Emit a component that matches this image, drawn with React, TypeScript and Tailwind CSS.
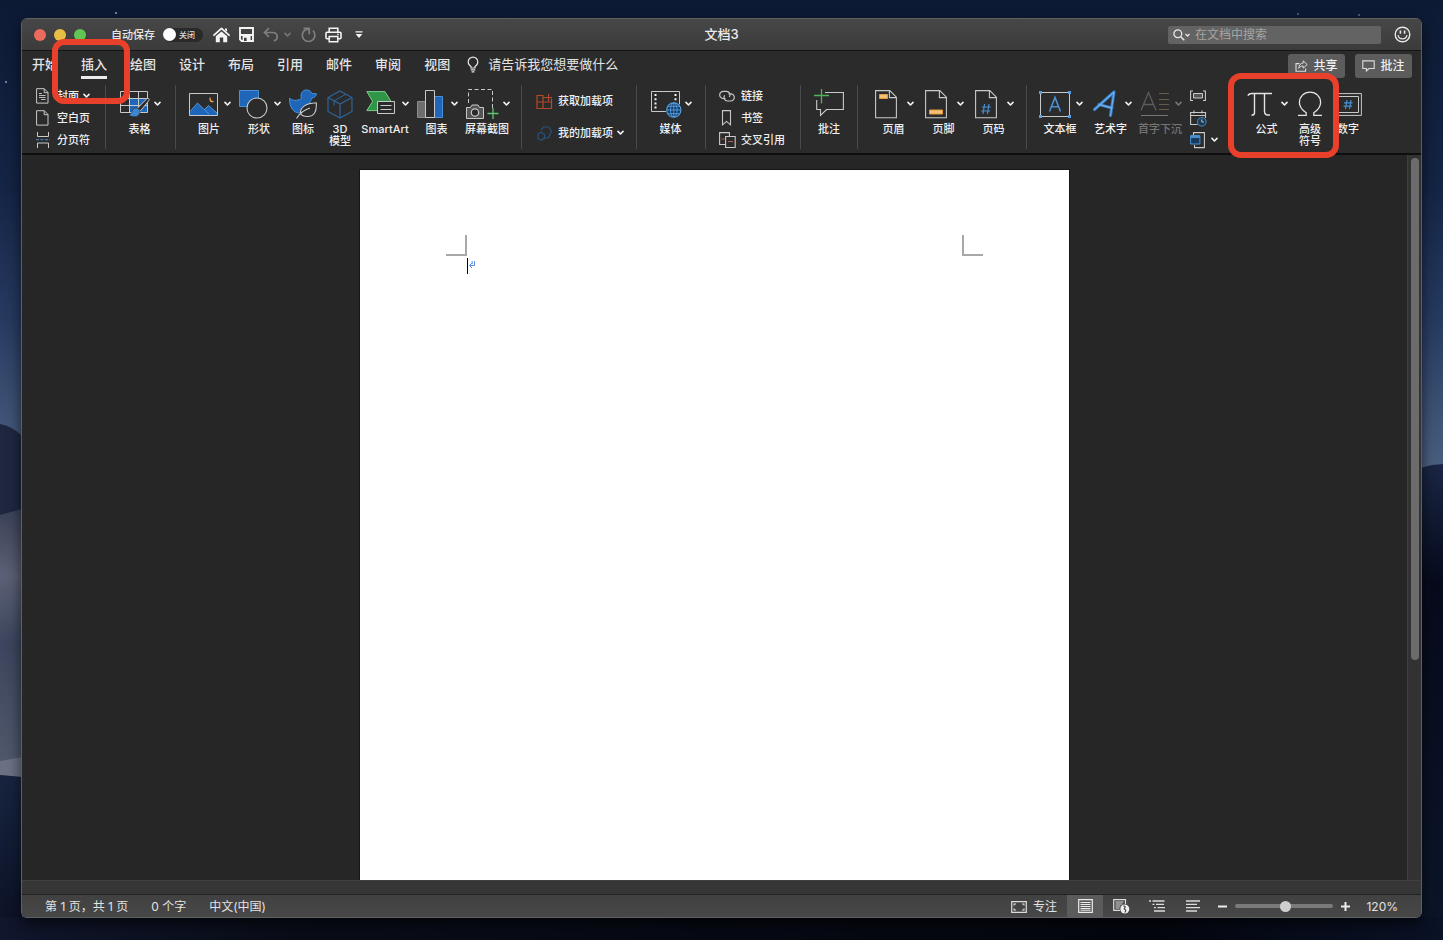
import React, { useState } from "react";

type IconProps = { w: number; h: number; children: React.ReactNode };

function Icon({ w, h, children }: IconProps) {
  return (
    <svg width={w} height={h} viewBox={`0 0 ${w} ${h}`} fill="none" className="block shrink-0" aria-hidden="true">
      {children}
    </svg>
  );
}

const LINE = "#c9c9c9";
const BLUE = "#1f66b8";
const SKY = "#4a90d0";

function Chevron({ dim = false }: { dim?: boolean }) {
  return (
    <Icon w={7} h={6}>
      <path d="M1 1.4 3.5 4 6 1.4" stroke={dim ? "#777" : "#f2f2f2"} strokeWidth="1.6" strokeLinecap="round" strokeLinejoin="round" />
    </Icon>
  );
}

/* ---------- title bar icons ---------- */

const HomeIcon = () => (
  <Icon w={17} h={16}>
    <path d="M1 8.2 8.5 1.4 16 8.2" stroke="#f4f4f4" strokeWidth="1.8" strokeLinecap="round" strokeLinejoin="round" />
    <path d="M2.8 9.2 8.5 4.4l5.7 4.800v6h-4V10.500H6.800v4.700h-4z" fill="#f4f4f4" />
    <path d="M12 1.4h2v3.4l-2-1.8z" fill="#f4f4f4" />
  </Icon>
);

const SaveIcon = () => (
  <Icon w={15} h={15}>
    <path d="M1 1h13v13H2.600L1 12.400z" stroke="#f4f4f4" strokeWidth="1.900" />
    <path d="M1 7h13v2H1z" fill="#f4f4f4" />
    <path d="M3.600 8.500h8V14h-8z" fill="#f4f4f4" />
    <path d="M5 10.800h2.600V14H5z" fill="#3f3f3f" />
  </Icon>
);

const UndoIcon = () => (
  <Icon w={16} h={15}>
    <path d="M6 1.2 1.5 5.5 6 9.8M1.8 5.5h7.4c3 0 5 1.8 5 4.3 0 2.2-1.4 3.7-3.4 4" stroke="#7e7e7e" strokeWidth="1.7" />
  </Icon>
);

const RedoIcon = () => (
  <Icon w={16} h={16}>
    <path d="M13 3.700a6.300 6.300 0 1 1-8.600-.2L9 1.800" stroke="#7e7e7e" strokeWidth="1.700" />
    <path d="M3.500 1.400H9.200V7.200" stroke="#7e7e7e" strokeWidth="1.700" />
  </Icon>
);

const PrintIcon = () => (
  <Icon w={17} h={16}>
    <path d="M4.2 5V1.2h8.6V5" stroke="#f4f4f4" strokeWidth="1.6" />
    <rect x="1" y="5.2" width="15" height="6.6" rx="1" stroke="#f4f4f4" strokeWidth="1.6" />
    <path d="M4.2 9.4h8.6v5.4H4.2z" fill="#3f3f3f" stroke="#f4f4f4" strokeWidth="1.5" />
    <circle cx="13" cy="7.4" r=".8" fill="#f4f4f4" />
  </Icon>
);

const CustomizeIcon = () => (
  <Icon w={8} h={8}>
    <path d="M.5.2h7v1.4h-7zM.6 3h6.8L4 7z" fill="#f4f4f4" />
  </Icon>
);

const SmileIcon = () => (
  <Icon w={17} h={17}>
    <circle cx="8.5" cy="8.5" r="7.300" stroke="#e8e8e8" strokeWidth="1.400" />
    <path d="M6.400 4.500v3.200M10.600 4.500v3.200" stroke="#e8e8e8" strokeWidth="1.600" />
    <path d="M4 9.200c.5 2.300 2.300 3.700 4.500 3.700s4-1.400 4.500-3.700" stroke="#e8e8e8" strokeWidth="1.300" />
  </Icon>
);

const BulbIcon = () => (
  <Icon w={12} h={17}>
    <path d="M4 12V10.400C2.300 9.400 1.200 7.800 1.200 5.900a4.800 4.800 0 0 1 9.600 0c0 1.900-1.100 3.500-2.800 4.500V12z" stroke="#e6e6e6" strokeWidth="1.200" />
    <path d="M3.800 13.800h4.400M4.600 15.800h2.800" stroke="#e6e6e6" strokeWidth="1.200" />
  </Icon>
);

const ShareIcon = () => (
  <Icon w={13} h={12}>
    <path d="M4.500 3.600H1v7.600h9.600V8.400" stroke="#dcdcdc" strokeWidth="1.100" />
    <path d="M8.200.9v2.200C5.400 3.300 4 5.200 3.700 8.300c1.200-1.600 2.500-2.300 4.500-2.300v2.200l4-3.600z" stroke="#dcdcdc" strokeWidth="1" />
  </Icon>
);

const BubbleIcon = () => (
  <Icon w={13} h={12}>
    <path d="M.8.900h11.400v7.600H7L4.400 11V8.500H.8z" stroke="#dcdcdc" strokeWidth="1.100" />
  </Icon>
);

/* ---------- ribbon icons ---------- */

const CoverIcon = () => (
  <Icon w={13} h={16}>
    <path d="M.6.700h7.600L12 4.500v10.600H.6zM8.200.700v4H12" stroke={LINE} />
    <path d="M3 5.500h3M3 7.500h6.600M3 9.500h6.600M5 11.500h4.600" stroke={LINE} strokeWidth=".9" />
  </Icon>
);

const BlankIcon = () => (
  <Icon w={13} h={16}>
    <path d="M.6.700h7.600L12 4.500v10.600H.6zM8.200.700v4H12" stroke={LINE} />
  </Icon>
);

const BreakIcon = () => (
  <Icon w={14} h={16}>
    <path d="M1.500 0v4.500h11V0M1.500 16v-5h11v5" stroke={LINE} />
    <path d="M0 7.700h14" stroke={SKY} strokeDasharray="3 1.500" />
  </Icon>
);

const TableIcon = () => (
  <Icon w={30} h={28}>
    <path d="M9.500 8h18v15h-18z" fill={BLUE} />
    <path d="M.5 1.500h27v21H.5zM.5 8.500h27M.5 15.500h27M9.500 1.500v21M18.500 1.500v21" stroke={LINE} />
    <path d="M28.600 8.500c.9.500.6 1.600 0 2.400L20.400 21l-3.200-2.600 9.400-9.400c.7-.6 1.400-.9 2-.5z" fill="#2b2b2b" stroke={LINE} />
    <path d="M17.200 18.200c-3-.6-4.600.8-5.200 3-.5 2-1.600 3.200-3.600 3.600 3.200 2.800 9.400 2.600 11-.6.600-1.300.6-2.300.6-3.200z" fill="#3d86d2" stroke="#2b2b2b" strokeWidth=".6" />
  </Icon>
);

const PictureIcon = () => (
  <Icon w={29} h={23}>
    <path d="M1 18.500 8.500 10l6.700 6.500 4.300-4.300L28 20v2H1z" fill={BLUE} />
    <path d="M1 18.500 8.500 10 20 21M15.500 16.500l4-4L28 20" stroke="#5a9ade" strokeWidth=".9" />
    <path d="M.5.500h28v22H.5z" stroke={LINE} />
    <path d="M21.200 4.500c-.2 2.400 1 4 3.400 3.900-1.800 1.600-5 .2-3.400-3.900z" fill="#f0a54a" stroke="#f0a54a" strokeWidth=".6" />
  </Icon>
);

const ShapesIcon = () => (
  <Icon w={29} h={29}>
    <path d="M.5.500h19v16H.5z" fill={BLUE} stroke="#4b8fd6" />
    <circle cx="18" cy="18" r="10" fill="#2b2b2b" stroke={LINE} strokeWidth="1.100" />
  </Icon>
);

const DuckIcon = () => (
  <Icon w={28} h={30}>
    <path d="M12.500 9.500C11 5 13 1 17.500 1c3 0 4.800 1.600 5.600 3.600l4.400.2c-.4 2.600-2.200 4-4.600 4.200-.6 2-1.700 3-1.700 4.500l-5 5-5 5.500C5 24.500 0 18.500.6 9c2 2.800 7.400 3.300 11.900.5z" fill={BLUE} stroke="#4b8fd6" />
    <path d="M27.300 13.800c.5 8-1.600 13.700-9 13.700-3 0-5.700-1-6.800-3-.6-6.200 5-10 15.800-10.700z" fill="#2b2b2b" stroke={LINE} strokeWidth="1.100" />
    <path d="M7.500 29.500c3-5 7-8.500 13.500-10.500" stroke={LINE} strokeWidth="1.100" />
  </Icon>
);

const CubeIcon = () => (
  <Icon w={26} h={29}>
    <path d="M13 1 25 7.500v14L13 28 1 21.500v-14z" stroke="#2f6499" strokeWidth="1.200" />
    <path d="M1 7.500 13 14l12-6.500M13 14v14" stroke="#2f6499" strokeWidth="1.200" />
    <path d="m7 10.800 12-6.600M7 10.800v5" stroke="#2f6499" />
  </Icon>
);

const SmartArtIcon = () => (
  <Icon w={32} h={26}>
    <path d="M3.800.600H22l6 9.800-5.200 9.200H3.800L9.600 10.400z" fill="#2f9547" stroke="#7fca8d" />
    <path d="M14.500 10.500h17v12h-17z" fill="#2b2b2b" stroke={LINE} />
    <path d="M17.500 14.500h11M17.500 18.500h11" stroke={LINE} />
  </Icon>
);

const ChartIcon = () => (
  <Icon w={27} h={29}>
    <path d="M.5 11.500h8v16h-8z" fill="#6d6d6d" stroke="#8d8d8d" />
    <path d="M17.500 6.500h8v21h-8z" fill={BLUE} stroke="#4b8fd6" />
    <path d="M8.500.500h9v27h-9z" fill="#2b2b2b" stroke={LINE} />
  </Icon>
);

const ScreenshotIcon = () => (
  <Icon w={33} h={31}>
    <path d="M2.500 14V.500h24V19" stroke={LINE} strokeDasharray="4 2.500" />
    <path d="M.5 18.500h4l1.500-2.500h6l1.500 2.500h4v11H.5z" fill="#555" stroke={LINE} />
    <circle cx="9" cy="23.500" r="3.700" fill="#2b2b2b" stroke={LINE} strokeWidth="1.200" />
    <path d="M27 19v11M21.500 24.500h11" stroke="#62c46f" strokeWidth="1.300" />
  </Icon>
);

const StoreIcon = () => (
  <Icon w={17} h={17}>
    <path d="M1 2.500h6v13H1zM1 9h14.500v6.500H7M15.500 9V5.500M7 4.500h3" stroke="#b4492a" strokeWidth="1.200" />
    <path d="M12.500 1v7M9 4.500h7" stroke="#b4492a" strokeWidth="1.200" />
  </Icon>
);

const MyAddinsIcon = () => (
  <Icon w={17} h={15}>
    <path d="M5 4.200 7.500 1h5l3 4-2.500 6-4 1.500" stroke="#29527b" strokeWidth="1.200" />
    <path d="M2.500 7.500 5.500 6.300l3 2.200v3.600l-3 2-3.700-1.400z" stroke="#29527b" strokeWidth="1.200" />
  </Icon>
);

const MediaIcon = () => (
  <Icon w={31} h={28}>
    <path d="M.5 1.500h28v20H.5z" stroke={LINE} />
    <path d="M4.500 4v16M24.500 4v8" stroke="#f2f2f2" strokeWidth="2" strokeDasharray="2 2.200" />
    <circle cx="22.800" cy="20" r="8.200" fill="#2b2b2b" />
    <circle cx="22.800" cy="20" r="7.100" fill="#173a60" stroke="#55a0e4" strokeWidth="1.100" />
    <path d="M15.700 20h14.200M22.800 12.900v14.200M17 16.300h11.600M17 23.700h11.600" stroke="#55a0e4" strokeWidth=".9" />
    <ellipse cx="22.800" cy="20" rx="3.300" ry="7.100" stroke="#55a0e4" strokeWidth=".9" />
  </Icon>
);

const LinkIcon = () => (
  <Icon w={16} h={12}>
    <path d="M6.500 8.500H4.300a3.600 3.600 0 0 1 0-7.200h3.200a3.600 3.600 0 0 1 2.900 5.700" stroke={LINE} strokeWidth="1.200" />
    <path d="M9.500 3.800h2.200a3.600 3.600 0 0 1 0 7.200H8.500a3.600 3.600 0 0 1-2.900-5.700" stroke={LINE} strokeWidth="1.200" />
  </Icon>
);

const BookmarkIcon = () => (
  <Icon w={16} h={16}>
    <path d="M3.500.600h8v14.200l-4-3.400-4 3.400z" stroke={LINE} strokeWidth="1.100" />
  </Icon>
);

const CrossRefIcon = () => (
  <Icon w={17} h={16}>
    <path d="M6 12.500H.6V.600h9.800V4" stroke={LINE} strokeWidth="1.100" />
    <path d="M6.600 4.500h9.600v11H6.600z" stroke={LINE} strokeWidth="1.100" />
    <path d="M2.500 7h3M9 9.500h5" stroke="#b0604c" strokeWidth="1.100" />
  </Icon>
);

const NewCommentIcon = () => (
  <Icon w={30} h={30}>
    <path d="M11 3.500h18.400v17H12.500l-6 6v-6H2.700V11" stroke={LINE} strokeWidth="1.100" />
    <path d="M7.500 0v14.500M0 6.500h15" stroke="#4fb35c" strokeWidth="1.300" />
  </Icon>
);

function SheetOutline() {
  return <path d="M.6.600h14.200l6.600 6.600v20.600H.6zM14.400.600v7h7" stroke={LINE} strokeWidth="1.100" />;
}

const HeaderIcon = () => (
  <Icon w={22} h={29}>
    <SheetOutline />
    <path d="M4.500 4.500h8v4h-8z" fill="#f3c078" stroke="#e89a3c" />
  </Icon>
);

const FooterIcon = () => (
  <Icon w={22} h={29}>
    <SheetOutline />
    <path d="M4.500 20h13v4h-13z" fill="#f3c078" stroke="#e89a3c" />
  </Icon>
);

const PageNumIcon = () => (
  <Icon w={22} h={29}>
    <SheetOutline />
    <path d="M9.600 14 8 24M14 14l-1.600 10M6.800 17h9M6.200 21h9" stroke={SKY} strokeWidth="1.200" />
  </Icon>
);

const TextBoxIcon = () => (
  <Icon w={32} h={27}>
    <path d="M1.500 1.500h29v24h-29z" stroke={LINE} />
    <path d="M10.500 20.500 16 6.500l5.500 14M12.500 15.800h7" stroke={SKY} strokeWidth="1.600" />
    <path d="M0 0h3v3H0zM29 0h3v3h-3zM0 24h3v3H0zM29 24h3v3h-3z" fill="#5b9ee0" />
  </Icon>
);

const WordArtIcon = () => (
  <Icon w={26} h={28}>
    <path d="M3.500 19.500 23 2 19.500 25.500M8 14.500l13 3.500" stroke="#2f74b8" strokeWidth="3.200" strokeLinecap="round" strokeLinejoin="round" />
    <path d="M3.500 19.500 23 2 19.500 25.500M8 14.500l13 3.500" stroke="#6cb0ee" strokeWidth="1.300" strokeLinecap="round" strokeLinejoin="round" />
  </Icon>
);

const DropCapIcon = () => (
  <Icon w={29} h={26}>
    <path d="M1 19.500 8.500 1.500 16 19.500M3.700 13.500h9.600" stroke="#5c5c5c" strokeWidth="1.300" />
    <path d="M19 2.500h10M19 8.500h10M19 13.500h10M19 18.500h10" stroke="#6a5a4c" />
    <path d="M1 24.500h27" stroke="#777" />
  </Icon>
);

const FieldIcon = () => (
  <Icon w={16} h={12}>
    <path d="M3 1H.6v9.500H3M13 1h2.400v9.500H13" stroke={LINE} strokeWidth="1.100" />
    <path d="M3.500 3.500h9v4.500h-9z" fill="#555" stroke={LINE} />
  </Icon>
);

const DateIcon = () => (
  <Icon w={17} h={17}>
    <path d="M7.500 14.500H.6V2.500h14.900V8M.6 5.500h14.900M4 .500v3M12 .500v3" stroke={LINE} strokeWidth="1.100" />
    <circle cx="11.800" cy="11.800" r="4.300" fill="#22384f" stroke={SKY} />
    <path d="M11.800 9.300v2.700h2" stroke="#9fcdf5" />
  </Icon>
);

const ObjectIcon = () => (
  <Icon w={16} h={17}>
    <path d="M3.500 3V.600h10.900v15H4.500V13" stroke={LINE} strokeWidth="1.100" />
    <path d="M.6 3.500h9.300V12H.6z" fill="#173a60" stroke={SKY} />
    <path d="M.6 5h9.300" stroke={SKY} strokeWidth="2" />
  </Icon>
);

const PiIcon = () => (
  <Icon w={26} h={25}>
    <path d="M.8 3.600C1.600 2 3 1.500 5 1.500h20" stroke="#e4e4e4" strokeWidth="1.400" />
    <path d="M7.500 1.500v19.200c0 1.600-.9 2.500-3 2.500M17.500 1.500v18c0 2.600 1.500 3.700 5.500 3.500" stroke="#e4e4e4" strokeWidth="1.400" />
  </Icon>
);

const OmegaIcon = () => (
  <Icon w={26} h={26}>
    <path d="M1 24.300h8.200v-2.600C5.500 19.300 2.400 16.500 2.400 11.500 2.400 5.500 7 1.200 13 1.200s10.600 4.300 10.600 10.300c0 5-3.100 7.800-6.800 10.200v2.600H25" stroke="#e4e4e4" strokeWidth="1.300" />
  </Icon>
);

const NumberIcon = () => (
  <Icon w={27} h={23}>
    <path d="M.6.600h25.800v21.800H.6z" stroke={LINE} />
    <path d="M3.500 3.500h20v16h-20z" stroke={LINE} />
    <path d="M12 7l-1.500 9M16 7l-1.500 9M9 9.800h8.500M8.600 13.200h8.500" stroke={SKY} strokeWidth="1.200" />
  </Icon>
);

/* ---------- status bar icons ---------- */

const FocusIcon = () => (
  <Icon w={16} h={12}>
    <path d="M.7.700h14.600v10.600H.7z" stroke="#dcdcdc" strokeWidth="1.200" />
    <path d="M3 4.500V3h2M11 3h2v1.500M3 7.500V9h2M11 9h2V7.500" stroke="#dcdcdc" strokeWidth="1.100" />
  </Icon>
);

const PrintLayoutIcon = () => (
  <Icon w={15} h={14}>
    <path d="M.7.700h13.600v12.600H.7z" stroke="#ececec" strokeWidth="1.200" />
    <path d="M2.500 3.500h10M2.500 5.500h10M2.500 7.500h10M2.500 9.500h10M2.500 11.200h10" stroke="#ececec" />
  </Icon>
);

const WebLayoutIcon = () => (
  <Icon w={17} h={15}>
    <path d="M12.500 5V.700H.7v10.600H7" stroke="#dcdcdc" strokeWidth="1.200" />
    <path d="M2.500 3h8M2.500 5h7M2.500 7h5M2.500 9h4" stroke="#dcdcdc" />
    <circle cx="11.800" cy="10" r="4.500" fill="#efefef" />
    <path d="M10.500 6.800c1.600.6 2.400 1.400 1 2.400-.8.800.7 1.300 1.200 2 .3.800-.4 1.600-1 2.300" stroke="#444" strokeWidth="1.200" />
  </Icon>
);

const OutlineIcon = () => (
  <Icon w={17} h={12}>
    <path d="M0 1h2M3.500 1h12M3.500 4.300h2M7 4.300h8M5 7.600h2M8.500 7.600H16M5 11h11" stroke="#dcdcdc" strokeWidth="1.300" />
  </Icon>
);

const DraftIcon = () => (
  <Icon w={15} h={12}>
    <path d="M0 1h14M0 4.300h11M0 7.600h14M0 11h11" stroke="#dcdcdc" strokeWidth="1.300" />
  </Icon>
);

/* ---------- building blocks ---------- */

type BigProps = {
  icon: React.ReactNode;
  label: React.ReactNode;
  width: string;
  menu?: boolean;
  dim?: boolean;
};

function BigButton({ icon, label, width, menu = false, dim = false }: BigProps) {
  return (
    <button type="button" disabled={dim} className={`flex shrink-0 flex-col items-center ${width}`}>
      <span className={`flex h-[38px] w-full items-center ${menu ? "justify-between" : "justify-center"}`}>
        {icon}
        {menu && <Chevron dim={dim} />}
      </span>
      <span className={`text-center leading-3 whitespace-nowrap ${menu ? "pr-0.5" : ""} ${dim ? "text-[#757575]" : ""}`}>{label}</span>
    </button>
  );
}

type RowProps = { icon: React.ReactNode; label: string; menu?: boolean; tall?: boolean; iconBox: string };

function RowButton({ icon, label, menu = false, tall = false, iconBox }: RowProps) {
  return (
    <button type="button" className={`flex items-center whitespace-nowrap ${tall ? "h-8" : "h-[22px]"}`}>
      <span className={`flex ${iconBox}`}>{icon}</span>
      {label}
      {menu && (
        <span className="pl-1">
          <Chevron />
        </span>
      )}
    </button>
  );
}

function Group({ pad, gap = "", last = false, children }: { pad: string; gap?: string; last?: boolean; children: React.ReactNode }) {
  return (
    <div className={`flex shrink-0 items-start ${pad} ${gap} ${last ? "" : "border-r border-[#4a4a4a]"}`}>{children}</div>
  );
}

const TABS = ["开始", "插入", "绘图", "设计", "布局", "引用", "邮件", "审阅", "视图"];

function TitleBar() {
  const [autosave, setAutosave] = useState(false);
  return (
    <header className="grid h-8 grid-cols-[1fr_auto_1fr] items-center border-b border-[#151515] bg-gradient-to-b from-[#474747] to-[#3b3b3b]">
      <div className="flex items-center pl-3">
        <div className="flex gap-2">
          <button type="button" aria-label="关闭窗口" className="size-3 rounded-full bg-[#ed6a5e]" />
          <button type="button" aria-label="最小化" className="size-3 rounded-full bg-[#e8bf45]" />
          <button type="button" aria-label="缩放" className="size-3 rounded-full bg-[#62c454]" />
        </div>
        <label className="ml-[25px] flex items-center gap-2 text-[11px] leading-4 font-medium text-[#e6e6e6]">
          自动保存
          <input type="checkbox" className="peer sr-only" checked={autosave} onChange={(e) => setAutosave(e.target.checked)} />
          <span className="flex h-3.5 w-10 items-center gap-[3px] rounded-full bg-[#2a2a2a] text-[8px] text-[#dadada]">
            <span className="size-[13px] rounded-full bg-white" />
            {autosave ? "打开" : "关闭"}
          </span>
        </label>
        <div className="ml-2.5 flex items-center gap-[9px]">
          <button type="button" aria-label="主页"><HomeIcon /></button>
          <button type="button" aria-label="保存"><SaveIcon /></button>
          <button type="button" aria-label="撤消" className="flex items-center gap-[5px]">
            <UndoIcon />
            <Chevron dim />
          </button>
          <button type="button" aria-label="重复"><RedoIcon /></button>
          <button type="button" aria-label="打印"><PrintIcon /></button>
          <button type="button" aria-label="自定义工具栏" className="pl-1"><CustomizeIcon /></button>
        </div>
      </div>
      <h1 className="text-[13px] font-medium text-[#ececec]">文档3</h1>
      <div className="flex items-center justify-end gap-[13px] pr-2.5">
        <label className="flex h-[18px] w-[213px] items-center gap-1 rounded-[2px] bg-[#636363] pl-[5px]">
          <Icon w={18} h={12}>
            <circle cx="4.800" cy="4.800" r="3.900" stroke="#e8e8e8" strokeWidth="1.300" />
            <path d="m7.700 7.700 3.600 3.600" stroke="#e8e8e8" strokeWidth="1.500" />
            <path d="m12.500 5 2 2 2-2" stroke="#e8e8e8" strokeWidth="1.300" />
          </Icon>
          <input
            type="text"
            aria-label="在文档中搜索"
            placeholder="在文档中搜索"
            className="min-w-0 flex-1 bg-transparent text-[12px] leading-4 text-white outline-none placeholder:text-[#a5a5a5]"
          />
        </label>
        <button type="button" aria-label="反馈"><SmileIcon /></button>
      </div>
    </header>
  );
}

function TabBar() {
  return (
    <div className="flex h-[31px] items-start justify-between bg-[#2b2b2b] pr-[9px] pl-2.5">
      <nav className="flex items-start gap-[23px] text-[13px] leading-5 font-medium text-[#e4e4e4]">
        {TABS.map((t) => (
          <button
            key={t}
            type="button"
            className={`mt-[3px] flex h-[25px] items-start border-b-[3px] whitespace-nowrap ${t === "插入" ? "border-[#ececec]" : "border-transparent"}`}
          >
            {t}
          </button>
        ))}
        <button type="button" className="-ml-1.5 mt-[3px] flex items-center gap-[9px] font-normal whitespace-nowrap">
          <BulbIcon />
          请告诉我您想要做什么
        </button>
      </nav>
      <div className="flex gap-2.5 pt-[3px] text-[12px] font-medium text-[#f0f0f0]">
        <button type="button" className="flex h-6 w-[57px] items-center justify-center gap-[5px] rounded-[3px] bg-[#5c5c5c]">
          <ShareIcon />
          共享
        </button>
        <button type="button" className="flex h-6 w-[57px] items-center justify-center gap-[5px] rounded-[3px] bg-[#5c5c5c]">
          <BubbleIcon />
          批注
        </button>
      </div>
    </div>
  );
}

function Ribbon() {
  return (
    <div className="h-[73px] overflow-hidden border-b-2 border-[#0e0e0e] bg-[#2b2b2b] pt-[3px] text-[11px] leading-4 font-medium text-[#f0f0f0]">
      <div className="flex h-16">
        <Group pad="pl-3.5 pr-[15px]">
          <div className="w-[54px]">
            <RowButton icon={<CoverIcon />} label="封面" menu iconBox="w-[21px]" />
            <RowButton icon={<BlankIcon />} label="空白页" iconBox="w-[21px]" />
            <RowButton icon={<BreakIcon />} label="分页符" iconBox="w-[21px]" />
          </div>
        </Group>
        <Group pad="px-3.5">
          <BigButton icon={<TableIcon />} label="表格" width="w-[41px]" menu />
        </Group>
        <Group pad="pl-[13px] pr-[11px]" gap="gap-2">
          <BigButton icon={<PictureIcon />} label="图片" width="w-[42px]" menu />
          <BigButton icon={<ShapesIcon />} label="形状" width="w-[42px]" menu />
          <BigButton icon={<DuckIcon />} label="图标" width="w-7" />
          <BigButton icon={<CubeIcon />} label={<>3D<br />模型</>} width="w-[30px]" />
          <BigButton icon={<SmartArtIcon />} label="SmartArt" width="w-[46px]" menu />
          <BigButton icon={<ChartIcon />} label="图表" width="w-[41px]" menu />
          <BigButton icon={<ScreenshotIcon />} label="屏幕截图" width="w-11" menu />
        </Group>
        <Group pad="pl-3.5 pr-3">
          <div className="w-[88px]">
            <RowButton icon={<StoreIcon />} label="获取加载项" iconBox="w-[22px]" tall />
            <RowButton icon={<MyAddinsIcon />} label="我的加载项" iconBox="w-[22px]" tall menu />
          </div>
        </Group>
        <Group pad="pl-3.5 pr-[13px]">
          <BigButton icon={<MediaIcon />} label="媒体" width="w-[41px]" menu />
        </Group>
        <Group pad="pl-[13px] pr-4">
          <div className="w-[65px]">
            <RowButton icon={<LinkIcon />} label="链接" iconBox="w-[22px]" />
            <RowButton icon={<BookmarkIcon />} label="书签" iconBox="w-[22px]" />
            <RowButton icon={<CrossRefIcon />} label="交叉引用" iconBox="w-[22px]" />
          </div>
        </Group>
        <Group pad="px-[13px]">
          <BigButton icon={<NewCommentIcon />} label="批注" width="w-[30px]" />
        </Group>
        <Group pad="pl-[17px] pr-3" gap="gap-[11px]">
          <BigButton icon={<HeaderIcon />} label="页眉" width="w-[39px]" menu />
          <BigButton icon={<FooterIcon />} label="页脚" width="w-[39px]" menu />
          <BigButton icon={<PageNumIcon />} label="页码" width="w-[39px]" menu />
        </Group>
        <Group pad="pl-3" gap="gap-2" last>
          <BigButton icon={<TextBoxIcon />} label="文本框" width="w-11" menu />
          <BigButton icon={<WordArtIcon />} label="艺术字" width="w-[41px]" menu />
          <BigButton icon={<DropCapIcon />} label="首字下沉" width="w-[42px]" menu dim />
          <div className="w-7">
            <button type="button" aria-label="域" className="flex h-[22px] items-center"><FieldIcon /></button>
            <button type="button" aria-label="日期和时间" className="flex h-[22px] items-center"><DateIcon /></button>
            <button type="button" aria-label="对象" className="flex h-[22px] w-full items-center justify-between">
              <ObjectIcon />
              <Chevron />
            </button>
          </div>
        </Group>
        <Group pad="pl-[29px]" gap="gap-2" last>
          <BigButton icon={<PiIcon />} label="公式" width="w-[41px]" menu />
          <BigButton icon={<OmegaIcon />} label={<>高级<br />符号</>} width="w-7" />
          <div className="pl-0.5">
            <BigButton icon={<NumberIcon />} label="数字" width="w-7" />
          </div>
        </Group>
      </div>
    </div>
  );
}

function DocumentArea() {
  return (
    <div className="flex min-h-0 flex-1">
      <div className="flex min-w-0 flex-1 justify-center bg-[#262626] pt-[15px]">
        <main className="w-[709px] bg-white px-[86px] pt-[65px] outline outline-1 outline-[#161616]">
          <div className="flex justify-between">
            <span className="size-[21px] border-r-2 border-b-2 border-[#a8a8a8]" />
            <span className="size-[21px] border-b-2 border-l-2 border-[#a8a8a8]" />
          </div>
          <div className="flex pt-0.5 pl-[21px]">
            <span className="h-4 w-px bg-black" />
            <Icon w={8} h={14}>
              <path d="M6.500 3v4.500H2M4 5 1.500 7.500 4 10M4.200 3v3" stroke="#5b8fee" strokeWidth="1" />
            </Icon>
          </div>
        </main>
      </div>
      <div className="flex w-3.5 justify-center border-l border-[#3e3e3e] bg-[#323232] pt-[3px]">
        <div className="h-[69.5%] w-2 rounded-full bg-[#6c6c6c]" />
      </div>
    </div>
  );
}

function StatusBar() {
  return (
    <footer className="flex h-[23px] items-center justify-between border-t border-[#222] bg-gradient-to-b from-[#414141] to-[#474747] text-[12px] leading-4 text-[#e2e2e2]">
      <div className="flex gap-[23px] pt-0.5 pl-[23px] whitespace-nowrap">
        <span>第 1 页，共 1 页</span>
        <span>0 个字</span>
        <span>中文(中国)</span>
      </div>
      <div className="flex h-full items-center pr-[23px]">
        <button type="button" className="mr-2.5 flex items-center gap-1.5 pt-0.5">
          <FocusIcon />
          专注
        </button>
        <button type="button" aria-label="页面视图" className="flex h-full w-9 items-center justify-center bg-[#5b5b5b]"><PrintLayoutIcon /></button>
        <button type="button" aria-label="Web 版式视图" className="flex h-full w-9 items-center justify-center"><WebLayoutIcon /></button>
        <button type="button" aria-label="大纲视图" className="flex h-full w-9 items-center justify-center"><OutlineIcon /></button>
        <button type="button" aria-label="草稿视图" className="flex h-full w-9 items-center justify-center"><DraftIcon /></button>
        <button type="button" aria-label="缩小" className="ml-[7px]">
          <Icon w={9} h={9}><path d="M0 4.500h9" stroke="#ececec" strokeWidth="2" /></Icon>
        </button>
        <input
          type="range"
          aria-label="缩放比例"
          min={0}
          max={100}
          defaultValue={52}
          className="mx-2 h-1 w-[98px] appearance-none rounded-full bg-[#7a7a7a] [&::-webkit-slider-thumb]:size-[11px] [&::-webkit-slider-thumb]:appearance-none [&::-webkit-slider-thumb]:rounded-full [&::-webkit-slider-thumb]:bg-[#cfcfcf]"
        />
        <button type="button" aria-label="放大">
          <Icon w={9} h={9}><path d="M0 4.500h9M4.500 0v9" stroke="#ececec" strokeWidth="2" /></Icon>
        </button>
        <span className="w-12 pt-0.5 text-right text-[12px]">120%</span>
      </div>
    </footer>
  );
}

function Wallpaper() {
  return (
    <svg className="absolute inset-0 h-full w-full" viewBox="0 0 1443 940" preserveAspectRatio="none" aria-hidden="true">
      <defs>
        <linearGradient id="sky" x1="0" y1="0" x2="0" y2="1">
          <stop offset="0" stopColor="#0d1a34" />
          <stop offset=".2" stopColor="#142444" />
          <stop offset=".34" stopColor="#263a60" />
          <stop offset=".5" stopColor="#4b6080" />
        </linearGradient>
        <linearGradient id="dune" x1="0" y1="0" x2="0" y2="1">
          <stop offset="0" stopColor="#3a4157" />
          <stop offset=".25" stopColor="#5a6075" />
          <stop offset=".5" stopColor="#3c455d" />
          <stop offset="1" stopColor="#525a6e" />
        </linearGradient>
        <linearGradient id="fore" x1="0" y1="0" x2="0" y2="1">
          <stop offset="0" stopColor="#17243f" />
          <stop offset="1" stopColor="#0b1024" />
        </linearGradient>
        <linearGradient id="east" x1="0" y1="0" x2="0" y2="1">
          <stop offset="0" stopColor="#1a2644" />
          <stop offset=".25" stopColor="#060b1c" />
          <stop offset="1" stopColor="#0c1529" />
        </linearGradient>
        <linearGradient id="floor" x1="0" y1="0" x2="1" y2="0">
          <stop offset="0" stopColor="#10162c" />
          <stop offset=".2" stopColor="#090d18" />
          <stop offset=".8" stopColor="#04060f" />
          <stop offset="1" stopColor="#0a1226" />
        </linearGradient>
      </defs>
      <path d="M0 0h1443v940H0z" fill="url(#sky)" />
      <path d="M0 424q12 2 22 12v90H0z" fill="#1f2740" />
      <path d="M0 515 22 509v270H0z" fill="url(#dune)" />
      <path d="M0 761 22 757v20L0 775z" fill="#6a7183" />
      <path d="M0 775 22 777v163H0z" fill="url(#fore)" />
      <path d="M1420 468l12-3 11-1v476h-23z" fill="url(#east)" />
      <path d="M0 917h1443v23H0z" fill="url(#floor)" />
      <g fill="#8fa0c0">
        <circle cx="116" cy="13" r="1" />
        <circle cx="6" cy="82" r="1" />
        <circle cx="1298" cy="14" r=".8" />
        <circle cx="1359" cy="15" r=".8" />
      </g>
    </svg>
  );
}

export default function App() {
  return (
    <div
      lang="zh-CN"
      className="relative flex min-h-screen flex-col px-[21px] pt-[18px] pb-[22px] [font-family:Inter,'Noto_Sans_CJK_SC',sans-serif]"
    >
      <Wallpaper />
      <div className="relative flex flex-1 flex-col overflow-hidden rounded-[6px] border border-[#5d605f] bg-[#2b2b2b] shadow-[0_6px_14px_rgba(0,0,0,0.6)]">
        <TitleBar />
        <TabBar />
        <Ribbon />
        <DocumentArea />
        <div className="h-3.5 border-t border-[#404040] bg-[#363636]" />
        <StatusBar />
      </div>
      <div className="pointer-events-none absolute top-[39px] left-[52px] h-[65px] w-[78px] rounded-[12px] border-[6px] border-[#e8402a]" />
      <div className="pointer-events-none absolute top-[73px] left-[1228px] h-[85px] w-[111px] rounded-[13px] border-[6px] border-[#e8402a]" />
    </div>
  );
}
